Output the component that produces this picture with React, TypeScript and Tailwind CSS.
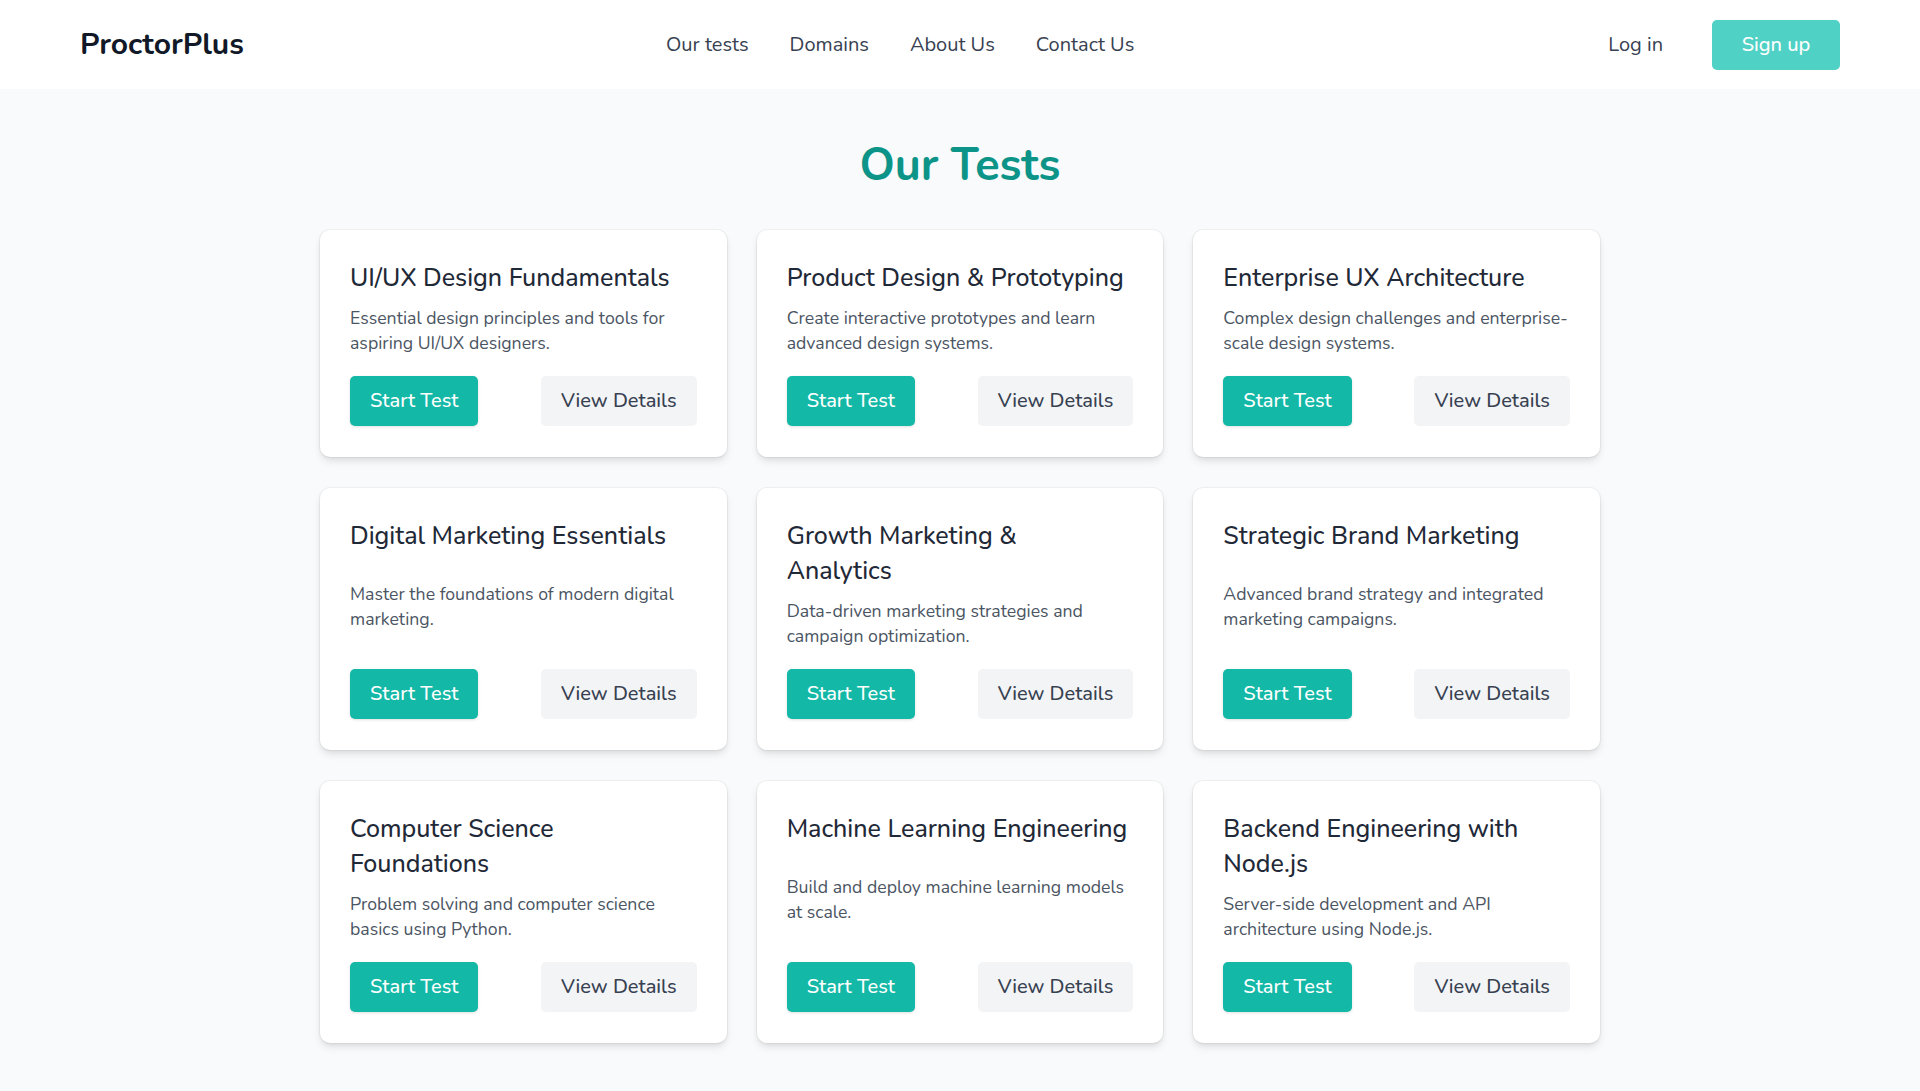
import React from "react";

type Test = { title: string; desc: string };

// "\n" marks where the reference wraps a title
const TESTS: Test[] = [
  { title: "UI/UX Design Fundamentals", desc: "Essential design principles and tools for aspiring UI/UX designers." },
  { title: "Product Design & Prototyping", desc: "Create interactive prototypes and learn advanced design systems." },
  { title: "Enterprise UX Architecture", desc: "Complex design challenges and enterprise-scale design systems." },
  { title: "Digital Marketing Essentials", desc: "Master the foundations of modern digital marketing." },
  { title: "Growth Marketing &\nAnalytics", desc: "Data-driven marketing strategies and campaign optimization." },
  { title: "Strategic Brand Marketing", desc: "Advanced brand strategy and integrated marketing campaigns." },
  { title: "Computer Science\nFoundations", desc: "Problem solving and computer science basics using Python." },
  { title: "Machine Learning Engineering", desc: "Build and deploy machine learning models at scale." },
  { title: "Backend Engineering with\nNode.js", desc: "Server-side development and API architecture using Node.js." },
];

const NAV = ["Our tests", "Domains", "About Us", "Contact Us"];

function TestCard({ test }: { test: Test }) {
  return (
    <div className="flex flex-col justify-between rounded-[10px] bg-white px-[30px] py-[31px] shadow-[0_0_0_1px_rgba(0,0,0,0.04),0_5px_8px_-1px_rgba(0,0,0,0.1),0_2px_5px_-1px_rgba(0,0,0,0.06)]">
      <h3 className="whitespace-pre-line text-[25px] leading-[35px] font-medium text-[#1f2937]">{test.title}</h3>
      <p className="mt-[10px] text-[17.7px] leading-[25px] text-[#4b5563]">{test.desc}</p>
      <div className="mt-5 flex items-center justify-between">
        <button className="h-[50px] rounded-[5px] bg-[#14b8a6] px-5 text-[20px] font-medium text-white shadow-[0_1px_3px_rgba(0,0,0,0.12)]">
          Start Test
        </button>
        <button className="h-[50px] rounded-[5px] bg-[#f3f4f6] px-5 text-[20px] font-medium text-[#374151]">
          View Details
        </button>
      </div>
    </div>
  );
}

export default function App() {
  return (
    <div className="min-h-screen bg-[#f9fafb] font-['Nunito','Lato','Noto_Sans',sans-serif]">
      <header className="flex h-[89px] items-center bg-white px-20">
        <span className="w-[163px] shrink-0 text-[30px] font-bold text-[#111827]">ProctorPlus</span>
        <nav className="ml-[423px] flex items-center gap-[41px] text-[20px] text-[#374151]">
          {NAV.map((item) => (
            <a key={item} href="#" className="hover:text-[#0d9488]">
              {item}
            </a>
          ))}
        </nav>
        <div className="ml-auto flex items-center gap-[49px]">
          <a href="#" className="text-[20px] text-[#374151]">
            Log in
          </a>
          <button className="h-[50px] w-[128px] rounded-[5px] bg-[#4fd1c5] text-[20px] font-medium text-white">
            Sign up
          </button>
        </div>
      </header>

      <main className="mx-auto max-w-[1280px] pt-[52px] pb-[50px]">
        <h1 className="mb-[39px] text-center text-[45px] leading-[50px] font-bold text-[#0d9488]">Our Tests</h1>
        <div className="grid grid-cols-3 gap-x-[30px] gap-y-[31px]">
          {TESTS.map((t) => (
            <TestCard key={t.title} test={t} />
          ))}
        </div>
      </main>
    </div>
  );
}
